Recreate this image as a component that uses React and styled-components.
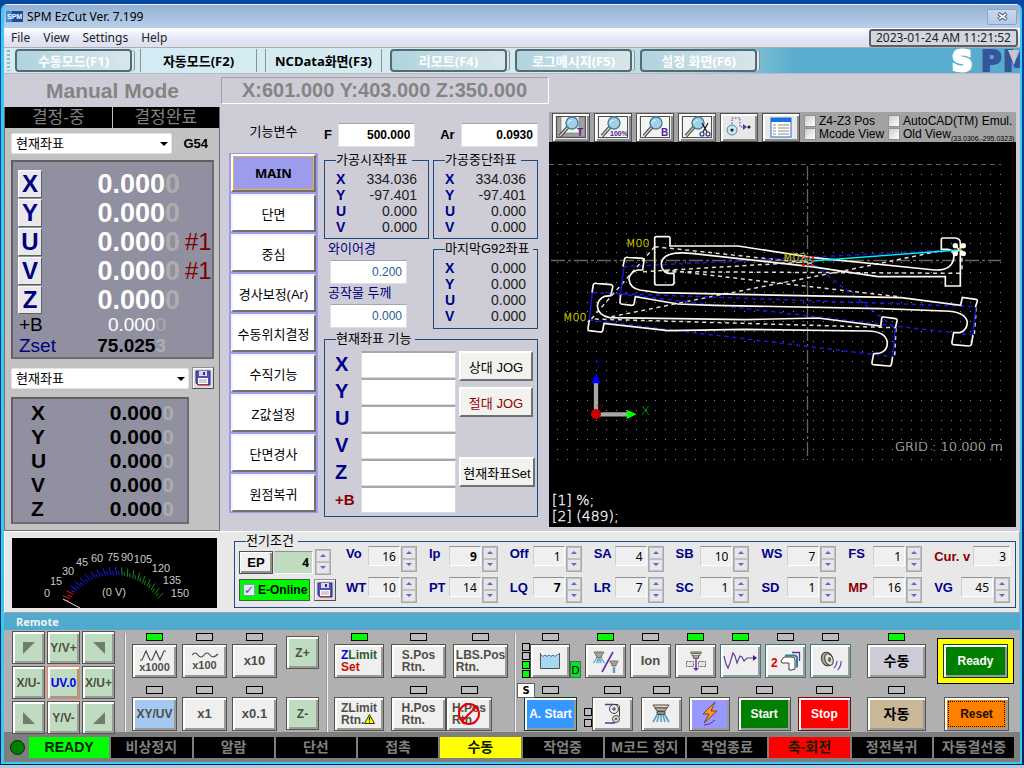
import React, { useId } from "react";
import styled, { createGlobalStyle, css } from "styled-components";

const KR = '"Liberation Sans", "Noto Sans CJK KR", sans-serif';
const UI = '"Noto Sans", "Noto Sans CJK KR", sans-serif';

const Global = createGlobalStyle`
  * { box-sizing: border-box; }
  body { margin: 0; background: #0c4da6; font-family: ${KR}; font-size: 13px; color: #000; }
  button, input, select { font-family: inherit; margin: 0; padding: 0; border-radius: 0; }
  svg { display: block; }
`;

/* ---------- window frame ---------- */
const Desktop = styled.div`
  min-height: 100vh;
  display: flex;
  flex-direction: column;
  padding: 4px 2px 0 1px;
  background: linear-gradient(180deg, #0648a0, #04245a);
`;
const Frame = styled.div`
  flex: 1;
  display: flex;
  flex-direction: column;
  border: solid #3cc8f0;
  border-width: 0 2px 2px 3px;
  border-radius: 6px 6px 0 0;
  overflow: hidden;
  background: #cecdd7;
`;
const Taskbar = styled.div`
  height: 3px;
  margin: 1px -2px 0 -1px;
  background: #b4c8dc;
`;
const TitleBar = styled.header`
  display: flex;
  align-items: center;
  gap: 4px;
  height: 24px;
  padding: 0 3px 0 2px;
  border-top: 1px solid #e8f2fc;
  background: linear-gradient(180deg, #93b0d2, #b9d0ea);
  font: 12px/16px ${UI};
`;
const CloseButton = styled.button`
  width: 30px;
  height: 16px;
  margin-left: auto;
  display: grid;
  place-items: center;
  border: 1px solid #8ca4c4;
  border-radius: 2px;
  background: linear-gradient(180deg, #c8d8ec, #b4cae6);
`;
const MenuBar = styled.nav`
  display: flex;
  align-items: center;
  gap: 13px;
  height: 20px;
  padding: 0 2px 0 7px;
  background: linear-gradient(180deg, #fff, #e6e8f6 50%, #dbdff1);
  border-bottom: 1px solid #b0b0a8;
`;
const MenuItem = styled.button`
  border: 0;
  background: none;
  font: 12px/16px ${UI};
  color: #222;
`;
const Clock = styled.time`
  margin-left: auto;
  padding: 0 5px;
  border: 2px solid #5a5e66;
  border-radius: 3px;
  background: #d4d6e2;
  font: 12px/14px ${UI};
  color: #222;
`;

/* ---------- mode tabs ---------- */
const ModeBar = styled.div`
  display: flex;
  align-items: center;
  height: 26px;
  padding-left: 3px;
  background: linear-gradient(90deg, #d2ecf3 0, #d6eaf0 55%, #a4d0de 70%, #58accd 78%);
  border-bottom: 1px solid #b8bcc8;
`;
const Grip = styled.span`
  width: 3px;
  height: 21px;
  margin-right: 5px;
  background: repeating-linear-gradient(180deg, #a4b0b8 0 2px, transparent 2px 4px);
`;
const ModeTab = styled.button`
  width: 117px;
  height: 23px;
  margin-right: 8px;
  font: bold 13px/16px ${UI};
  ${(p) =>
    p.$flat
      ? css`
          border: solid #8a9298;
          border-width: 0 1px;
          background: none;
          color: #000;
        `
      : css`
          border: 2px solid #566a72;
          border-radius: 4px;
          background: linear-gradient(90deg, #b0d4de, #d8e6ea);
          box-shadow: 3px 0 0 -1px #d6eaf0, 4px 0 0 -1px #8a9298;
          color: #fff;
        `}
`;
const Logo = styled.svg`
  margin-left: auto;
  width: 70px;
  height: 25px;
  overflow: visible;
`;
const ModeRow = styled.div`
  display: flex;
  align-items: center;
  height: 33px;
  font: bold 20px/24px "Liberation Sans", sans-serif;
  color: #848484;
`;
const ModeName = styled.h1`
  width: 217px;
  margin: 0;
  text-align: center;
  font-size: 21px;
  line-height: 24px;
`;
const ModePos = styled.div`
  width: 328px;
  height: 27px;
  padding-left: 20px;
  border: 1px solid;
  border-color: #a0a0a4 #fff #fff #a0a0a4;
`;

/* ---------- main area ---------- */
const Main = styled.main`
  flex: 1;
  display: flex;
`;
const Side = styled.section`
  width: 216px;
  background: #c2c2c2;
  border: solid #707070;
  border-width: 0 1px 1px 1px;
`;
const PosHead = styled.div`
  display: grid;
  grid-template-columns: 1fr 1fr;
  gap: 1px;
  background: #c0c0c0;
  font-size: 17px;
  line-height: 21px;
  text-align: center;
  color: #808080;
  & > span { background: #000; }
`;
const SideRow = styled.div`
  display: flex;
  align-items: center;
  justify-content: space-between;
  padding: ${(p) => (p.$tight ? "0 5px 0 6px" : "5px 11px 0 6px")};
  height: ${(p) => (p.$tight ? 38 : 26)}px;
  font-weight: bold;
`;
const SelectWrap = styled.div`
  position: relative;
  width: ${(p) => p.$w}px;
  &::after {
    content: "";
    position: absolute;
    right: 4px;
    top: 9px;
    border: 4px solid transparent;
    border-top-color: #000;
    border-bottom: 0;
    pointer-events: none;
  }
`;
const Select = styled.select`
  appearance: none;
  width: 100%;
  height: 21px;
  padding: 0 4px;
  border: 1px solid #e4e4e4;
  border-radius: 2px;
  background: #fff;
  font-size: 13px;
  color: #000;
`;
const Display = styled.div`
  margin: ${(p) => (p.$small ? "0 30px 6px 6px" : "6px 5px 0 6px")};
  padding: ${(p) => (p.$small ? "2px 0 1px" : "7px 0 1px")};
  border: 2px solid;
  border-color: #606060 #6c6c74 #6c6c74 #606060;
  background: #9090a0;
  font-family: "Liberation Sans", sans-serif;
`;
const AxisRow = styled.div`
  display: grid;
  grid-template-columns: 64px auto 1fr;
  align-items: center;
  height: 29px;
  padding-left: 5px;
`;
const AxisButton = styled.button`
  width: 24px;
  height: 28px;
  border: 1px solid;
  border-color: #fff #606060 #606060 #fff;
  background: #e8e8ec;
  font-weight: bold;
  font-size: 24px;
  line-height: 24px;
  color: #00007c;
`;
const AxisValue = styled.span`
  width: 98px;
  text-align: right;
  font-weight: bold;
  font-size: 27px;
  line-height: 28px;
  color: #fff;
`;
const Faint = styled.span`
  color: #adadad;
`;
const Turn = styled.span`
  padding-left: 5px;
  font-size: 24px;
  color: #800000;
`;
const ExtraRow = styled.div`
  display: flex;
  justify-content: space-between;
  padding: 0 46px 0 6px;
  height: 21px;
  line-height: 21px;
  font-size: 19px;
  color: ${(p) => p.$color};
`;
const ExtraValue = styled.span`
  color: ${(p) => (p.$bold ? "#000" : "#fff")};
  font-weight: ${(p) => (p.$bold ? "bold" : "normal")};
`;
const SmallAxis = styled.div`
  display: flex;
  justify-content: space-between;
  padding: 0 13px 0 18px;
  font-weight: bold;
  font-size: 21px;
  line-height: 24px;
`;
const IconButton = styled.button`
  width: 22px;
  height: 22px;
  display: grid;
  place-items: center;
  border: 1px solid;
  border-color: #909090 #505050 #505050 #909090;
  background: #dcdcdc;
  box-shadow: inset 1px 1px #fff;
`;

/* ---------- functions ---------- */
const Functions = styled.section`
  display: grid;
  grid-template-columns: 89px 214px;
  column-gap: 6px;
  width: 329px;
  padding-left: 9px;
  align-content: start;
`;
const FnTitle = styled.div`
  height: 46px;
  padding-top: 16px;
  line-height: 18px;
  text-align: center;
`;
const FnMenu = styled.nav`
  display: grid;
  gap: 2px;
  padding: 1px 2px;
  background: #9c9cee;
  align-self: start;
`;
const FnButton = styled.button`
  height: 38px;
  border: 2px solid;
  border-color: ${(p) => (p.$on ? "#fff #707070 #707070 #fff" : "#f4f4f4 #707070 #707070 #f4f4f4")};
  background: ${(p) => (p.$on ? "#9c9cee" : "#fff")};
  outline: ${(p) => (p.$on ? "1px solid #f0b030" : "0")};
  outline-offset: -3px;
  font-family: ${(p) => (p.$on ? UI : KR)};
  font-weight: ${(p) => (p.$on ? "bold" : "normal")};
  font-size: 13px;
  white-space: nowrap;
`;
const Variables = styled.div`
  display: flex;
  align-items: center;
  justify-content: space-between;
  height: 29px;
  margin: 13px 0 3px;
  font-weight: bold;
`;
const VarInput = styled.input`
  width: 77px;
  height: 24px;
  padding: 0 4px;
  border: 1px solid #e0e0e4;
  border-top-color: #a4a4ac;
  background: #fff;
  text-align: right;
  font-weight: ${(p) => (p.$plain ? "normal" : "bold")};
  font-size: 12px;
  color: ${(p) => (p.$plain ? "#285c98" : "#000")};
`;
const Gap = styled.span`
  width: 12px;
`;
const Pair = styled.div`
  display: grid;
  grid-template-columns: 1fr 1fr;
  gap: 4px;
  margin-bottom: 2px;
`;
const Box = styled.fieldset`
  margin: 0;
  min-width: 0;
  border: 1px solid #1c4c80;
  padding: ${(p) => p.$pad || "3px 11px 3px"};
`;
const Legend = styled.legend`
  margin-left: ${(p) => p.$ml || 0}px;
  padding: 0 4px 0 0;
  line-height: 16px;
  font-size: 13px;
  white-space: nowrap;
`;
const Coord = styled.dl`
  display: flex;
  justify-content: space-between;
  margin: 0;
  font-size: 14px;
  line-height: 16px;
`;
const CoordAxis = styled.dt`
  font-weight: bold;
  color: #00008a;
`;
const CoordValue = styled.dd`
  margin: 0;
  color: #202020;
`;
const Field = styled.div`
  padding: 0 0 1px 4px;
  & > label { display: block; height: 19px; line-height: 16px; color: #00007c; }
  & > input { display: block; margin-left: 2px; }
`;
const JogGrid = styled.div`
  display: grid;
  grid-template-columns: 121px 76px;
  column-gap: 3px;
`;
const JogRow = styled.div`
  display: flex;
  align-items: center;
  justify-content: space-between;
  height: 27px;
  color: ${(p) => (p.$b ? "#800000" : "#00008a")};
  font-weight: bold;
  font-size: ${(p) => (p.$b ? 15 : 20)}px;
`;
const JogInput = styled.input`
  width: 95px;
  height: 27px;
  border: 1px solid #d8dce0;
  border-top: 2px solid #a8a8ac;
  background: #fff;
`;
const JogButtons = styled.div`
  display: flex;
  flex-direction: column;
  gap: 6px;
  padding-bottom: 26px;
`;
const JogButton = styled.button`
  width: ${(p) => (p.$set ? 76 : 74)}px;
  height: 30px;
  margin-top: ${(p) => (p.$set ? "auto" : "0")};
  border: 2px solid;
  border-color: #fff #707070 #707070 #fff;
  background: #f2f2ee;
  white-space: nowrap;
  font-size: 13px;
  color: ${(p) => p.$color || "#000"};
`;

/* ---------- viewer ---------- */
const Viewer = styled.section`
  flex: 1;
  min-width: 0;
  display: flex;
  flex-direction: column;
  margin: 5px 4px 4px 0;
`;
const ViewTools = styled.div`
  display: flex;
  align-items: center;
  gap: 4px;
  height: 30px;
  padding: 0 3px;
  background: #a2a2a2;
`;
const ViewButton = styled.button`
  width: 38px;
  height: 29px;
  display: grid;
  place-items: center;
  border: 1px solid #505050;
  box-shadow: inset 2px 2px #fff, inset -2px -2px #8c8c8c;
  background: #e8e8e8;
  flex: none;
`;
const Checks = styled.div`
  position: relative;
  display: grid;
  grid-template-columns: 80px auto;
  column-gap: 4px;
  font-size: 12px;
`;
const Check = styled.label`
  display: flex;
  align-items: center;
  gap: 3px;
  height: 13px;
  white-space: nowrap;
`;
const CheckBox = styled.input`
  appearance: none;
  width: 12px;
  height: 12px;
  flex: none;
  border: 1px solid #909090;
  background: linear-gradient(135deg, #c8ccd0, #fff);
  ${(p) =>
    p.$blue &&
    css`
      border-color: #8098b8;
      background: #e4ecf8;
      display: grid;
      place-items: center;
      &:checked::after { content: "✓"; font: bold 12px/10px "DejaVu Sans", sans-serif; color: #3c50a0; }
    `}
`;
const Cursor = styled.span`
  position: absolute;
  right: -2px;
  bottom: -3px;
  font-size: 7px;
  line-height: 8px;
`;
const Canvas = styled.svg`
  width: 100%;
  height: auto;
  background: #000;
  font-family: "DejaVu Sans", sans-serif;
  font-weight: 200;
`;

/* ---------- electric conditions ---------- */
const Electric = styled.section`
  display: grid;
  grid-template-columns: 205px minmax(0, 1fr);
  gap: 17px;
  height: 82px;
  padding: 1px 3px 5px 7px;
  border: 1px solid;
  border-color: #fff #a0a0a0 #a0a0a0 #fff;
  background: #e8e8e8;
`;
const Gauge = styled.svg`
  width: 205px;
  height: 70px;
  margin-top: 5px;
  background: #000;
  font-family: "Liberation Sans", sans-serif;
`;
const ElecBody = styled.div`
  display: grid;
  grid-template-columns: 97px 1fr;
  gap: 10px;
`;
const ElecLeft = styled.div`
  display: grid;
  grid-template-columns: auto auto auto;
  justify-content: space-between;
  align-content: start;
  row-gap: 4px;
`;
const EpButton = styled.button`
  width: 34px;
  height: 23px;
  margin-top: 2px;
  border: 1px solid #505050;
  box-shadow: inset 1px 1px #fff, inset -2px -2px #909090;
  background: #f0f0f0;
  font-weight: bold;
  font-size: 13px;
`;
const OnlineLabel = styled.label`
  grid-column: 1 / 3;
  width: 71px;
  height: 22px;
  display: flex;
  align-items: center;
  gap: 3px;
  padding-left: 3px;
  border: 1px solid #406040;
  background: #00f800;
  font-weight: bold;
  font-size: 12px;
  white-space: nowrap;
`;
const Params = styled.div`
  display: grid;
  grid-template-columns: 71fr 69fr 72fr 70fr 74fr 75fr 74fr 76fr;
  column-gap: 12px;
  row-gap: 5px;
  align-content: start;
  margin-top: -3px;
`;
const Param = styled.div`
  display: flex;
  align-items: flex-start;
  height: 26px;
  & > label {
    margin-right: auto;
    font-weight: bold;
    font-size: 13px;
    line-height: ${(p) => (p.$low ? 22 : 16)}px;
    white-space: nowrap;
    color: ${(p) => (p.$red ? "#8a0000" : "#00008a")};
  }
`;
const ParamInput = styled.input`
  width: ${(p) => p.$w || 32}px;
  height: ${(p) => (p.$green ? 23 : 20)}px;
  margin-top: ${(p) => (p.$green ? 2 : 0)}px;
  padding: 0 3px;
  border: 1px solid;
  border-color: #909090 #fff #fff #d0d0d0;
  background: ${(p) => (p.$green ? "#c0dcc0" : "#efefef")};
  text-align: right;
  font: ${(p) => (p.$bold ? "bold" : "normal")} 12px/16px ${UI};
`;
const SpinWrap = styled.span`
  display: grid;
  width: 16px;
  height: 26px;
  margin-left: 1px;
  padding: 0;
  border: 1px solid #a8a8ac;
  background: #fff;
`;
const SpinButton = styled.button`
  display: grid;
  place-items: center;
  min-height: 0;
  border: 1px solid #c0c0c4;
  background: #e6e6ea;
`;

/* ---------- remote ---------- */
const RemoteTitle = styled.h2`
  margin: 0;
  height: 17px;
  padding-left: 12px;
  background: #50aacd;
  font: bold 11px/17px "Noto Sans", sans-serif;
  color: #f4f4f4;
`;
const Remote = styled.section`
  display: flex;
  height: 102px;
  padding: 3px 6px 0 8px;
  background: #b0b0b0;
`;
const Divider = styled.span`
  width: 2px;
  margin: 0 6px;
  background: linear-gradient(90deg, #989898 50%, #f0f0f0 50%);
`;
const Pad = styled.div`
  display: grid;
  grid-template-columns: repeat(3, 33px);
  grid-auto-rows: 33px;
  gap: 2px;
  width: 106px;
  margin-top: -2px;
`;
const Raised = styled.button`
  position: relative;
  width: ${(p) => (p.$w ? p.$w + "px" : "auto")};
  height: ${(p) => p.$h || 34}px;
  display: grid;
  place-items: center;
  flex: none;
  border: 1px solid ${(p) => p.$edge || "#55554e"};
  box-shadow: inset 2px 2px #fff, inset -2px -2px #9a9a9a;
  background: ${(p) => p.$bg || "#efefef"};
  color: ${(p) => p.$color || "#4e4e46"};
  font-weight: bold;
  font-size: ${(p) => p.$fs || 12}px;
  line-height: 12px;
  white-space: nowrap;
`;
const PadButton = styled(Raised)`
  height: 33px;
  background: #c0dcc0;
  font-size: 12px;
`;
const TwoLine = styled.span`
  text-align: left;
`;
const Blue = styled.span`
  color: #0000f0;
`;
const Green = styled.span`
  color: #2c5c2c;
`;
const Red = styled.span`
  color: #c01000;
`;
const Rows = styled.div`
  display: flex;
  flex-direction: column;
  gap: 8px;
  margin-left: ${(p) => (p.$push ? "auto" : "0")};
`;
const Row = styled.div`
  display: flex;
  align-items: flex-end;
  gap: ${(p) => p.$gap || 0}px;
  height: 45px;
  justify-content: ${(p) => (p.$spread ? "space-between" : "flex-start")};
  padding-left: ${(p) => (p.$spread ? 2 : 0)}px;
`;
const Cell = styled.div`
  display: flex;
  flex-direction: column;
  align-items: center;
  gap: 3px;
  position: relative;
`;
const Lamp = styled.span`
  width: 17px;
  height: 8px;
  border: 1px solid #000;
  visibility: ${(p) => (p.$none ? "hidden" : "visible")};
  background: ${(p) => (p.$on ? "#00ff00" : "#bcbcbc")};
`;
const LampStack = styled.span`
  display: grid;
  gap: ${(p) => (p.$two ? 3 : 1)}px;
  align-self: flex-end;
  margin-bottom: ${(p) => (p.$two ? 4 : 0)}px;
  & > ${Lamp} { width: 8px; }
`;
const ZCol = styled.div`
  display: flex;
  flex-direction: column;
  justify-content: space-between;
  margin: 3px 1px 2px 9px;
`;
const Horizontal = styled.div`
  display: flex;
`;
const SButton = styled.button`
  position: absolute;
  left: -7px;
  top: -3px;
  width: 18px;
  height: 15px;
  border: 1px solid #606060;
  background: #fff;
  font: bold 10px/12px "DejaVu Sans", sans-serif;
`;
const DButton = styled.button`
  align-self: flex-end;
  width: 11px;
  height: 17px;
  border: 1px solid #606060;
  background: #00e820;
  font-size: 11px;
  line-height: 12px;
`;
const Gold = styled.div`
  margin: 5px 0 0 11px;
  padding: 5px;
  border: 1px solid #000;
  background: #ffff00;
`;
const LastCol = styled.div`
  display: flex;
  flex-direction: column;
`;
const ResetWrap = styled.div`
  margin: 13px 0 0 18px;
`;
const ResetButton = styled(Raised)`
  outline: 1px dotted #000;
  outline-offset: -5px;
`;

/* ---------- status ---------- */
const Status = styled.footer`
  display: flex;
  align-items: center;
  gap: 2px;
  height: 30px;
  padding: 0 6px;
  background: #7e7e7e;
  text-align: center;
`;
const Dot = styled.span`
  width: 15px;
  height: 15px;
  margin-right: 2px;
  border: 1px solid #102010;
  border-radius: 50%;
  background: #008000;
`;
const StatusCell = styled.div`
  flex: 1;
  height: 21px;
  font: bold 14px/20px ${KR};
  white-space: nowrap;
  background: ${(p) => p.$bg || "#000"};
  color: ${(p) => (p.$bg ? "#102000" : "#808080")};
`;

/* ---------- small drawings ---------- */
const Floppy = () => (
  <svg width="16" height="16" viewBox="0 0 16 16">
    <path d="M1 1h14v14H3l-2-2z" fill="#5050b8" stroke="#303088" />
    <rect x="4" y="1" width="8" height="5" fill="#d8d8f0" />
    <rect x="8" y="2" width="2" height="3" fill="#303088" />
    <rect x="3" y="8" width="10" height="7" fill="#fff" />
    <path d="M4 10h8M4 12h8" stroke="#a0a0a0" />
    <path d="M3 14.5h10" stroke="#e02020" />
  </svg>
);
const Caret = ({ down }) => (
  <svg width="6" height="4" viewBox="0 0 6 4">
    <path d={down ? "M0 0h6l-3 3z" : "M3 0l3 3H0z"} fill="#5070b8" />
  </svg>
);
const Lens = ({ kind }) => (
  <svg width="32" height="24" viewBox="0 0 32 24">
    <rect x="1.5" y="1.5" width="29" height="21" fill="#f4f4f0" stroke="#505050" />
    {kind === "T" && <path d="M2 2h4v16h18V2h6v20H2z" fill="#a0a0a0" stroke="#606060" strokeWidth=".5" />}
    <path d="M13 12l-8 9" stroke="#404040" strokeWidth="3.4" />
    <path d="M13 12l-8 9" stroke="#d0d0d0" strokeWidth="1.4" />
    <circle cx="17" cy="8" r="6" fill="#a4d0e4" stroke="#4080a0" strokeWidth="1.4" />
    <path d="M13 8q1-3 4-3" fill="none" stroke="#e8f8ff" />
    {kind === "cut" ? (
      <g fill="none" stroke="#303090" strokeWidth="1.2">
        <path d="M21 8l5 9M27 8l-5 9" stroke="#101010" />
        <circle cx="21" cy="19" r="2" />
        <circle cx="27" cy="19" r="2" />
      </g>
    ) : (
      <text x={kind === "100%" ? 13 : 22} y="21" fontSize={kind === "100%" ? 7 : 10} fontWeight="bold" fontFamily="Liberation Sans" fill="#502090">
        {kind}
      </text>
    )}
  </svg>
);
const TargetIcon = () => (
  <svg width="32" height="24" viewBox="0 0 32 24">
    <circle cx="9" cy="15" r="5" fill="#c8e8f0" stroke="#5090a8" />
    <path d="M9 9v-6h8v9h7" fill="none" stroke="#6030a0" strokeDasharray="1.5 1.5" />
    <path d="M20 9l4 3-4 3z" fill="#6030a0" />
    <circle cx="9" cy="15" r="1.6" fill="#202020" />
    <circle cx="26" cy="12" r="1.6" fill="#202020" />
  </svg>
);
const ListIcon = () => (
  <svg width="22" height="21" viewBox="0 0 22 21">
    <rect x="1" y="1" width="20" height="19" fill="#fff" stroke="#2868c8" />
    <rect x="1" y="1" width="20" height="4" fill="#1870e0" />
    <path d="M3 8h3M3 11h3M3 14h3M3 17h3M8 8h11M8 11h11M8 14h11M8 17h11" stroke="#888" />
  </svg>
);
const Nozzle = ({ x, y, s = 1, spray }) => (
  <g transform={`translate(${x} ${y}) scale(${s})`}>
    <path d="M-6 0h12l-2 4h-8z" fill="#e0dcd0" stroke="#504840" />
    <path d="M-4 1.5h8M-3 4v3h6V4" fill="#b0a898" stroke="#504840" />
    {spray && <path d="M-3 8l-4 6M-1 8l-2 6M1 8l2 6M3 8l4 6M0 8v6" stroke="#50a0c8" strokeWidth="1.4" fill="none" />}
  </g>
);
const TankIcon = () => (
  <svg width="24" height="22" viewBox="0 0 24 22">
    <path d="M2 5l3 2 3-2 3 2 3-2 3 2 5-2v13H2z" fill="#a8d8f0" />
    <path d="M2.500 3v15.500h19V3" fill="none" stroke="#505050" />
    <path d="M3 5q2 3 4 0 2 3 4 0 2 3 4 0 2 3 4 0l3-1" fill="none" stroke="#2878a0" />
  </svg>
);
const SprayPair = () => (
  <svg width="30" height="26" viewBox="0 0 30 26">
    <Nozzle x={8} y={4} s={0.8} spray />
    <Nozzle x={23} y={13} s={0.7} />
    <path d="M23 19v6" stroke="#50a0c8" strokeWidth="2.4" />
    <path d="M22 4L11 24" stroke="#6030a0" strokeWidth="1.6" />
  </svg>
);
const Drill = () => (
  <svg width="26" height="24" viewBox="0 0 26 24">
    <Nozzle x={13} y={3} s={0.9} />
    <path d="M3.500 12.500h7v5h-7zM15.500 12.500h7v5h-7z" fill="#e4e4e4" stroke="#606060" strokeDasharray="2 1" />
    <path d="M13 10v10" stroke="#6030a0" strokeWidth="1.4" />
    <path d="M10 19h6l-3 3z" fill="#6030a0" />
  </svg>
);
const DecayWave = () => (
  <svg width="35" height="20" viewBox="0 0 35 20">
    <path d="M1 5L3 13 5 17 7 12 10 2 12 5 14 12 17 5 19 6 21 10 24 7 26 7H33" fill="none" stroke="#6040a0" strokeWidth="1.2" />
    <path d="M30 4l4 3-4 3z" fill="#402080" />
  </svg>
);
const Bends = () => (
  <svg width="30" height="22" viewBox="0 0 30 22">
    <text x="0" y="17" fontSize="12" fontWeight="bold" fontFamily="Liberation Sans" fill="#e00000">2</text>
    <path d="M21 2.500h7.500V11" fill="none" stroke="#6030a0" strokeWidth="1.300" />
    <path d="M14 5.500h9q3 0 3 3v9" fill="none" stroke="#308090" strokeWidth="2" />
    <path d="M10 11l3-4h8q3 0 3 3v9l-3 1h-3v-7h-7z" fill="#fff" stroke="#404040" />
  </svg>
);
const Horn = () => (
  <svg width="26" height="24" viewBox="0 0 26 24">
    <ellipse cx="9" cy="10" rx="5.500" ry="7" fill="#a8a898" stroke="#404038" transform="rotate(-20 9 10)" />
    <ellipse cx="11" cy="10.500" rx="4" ry="6" fill="#e0e0d4" stroke="#404038" transform="rotate(-20 11 10.500)" />
    <ellipse cx="11.500" cy="10.500" rx="1.500" ry="2.500" fill="#606058" />
    <path d="M16 19q3-3 3-7M19.500 21q4-4 3.500-9" fill="none" stroke="#6050b0" strokeWidth="1.2" />
  </svg>
);
const Belt = () => (
  <svg width="20" height="22" viewBox="0 0 20 22">
    <path d="M2 1.500h10M2 20h10" stroke="#6030a0" strokeWidth="1.4" />
    <circle cx="11" cy="6" r="4.500" fill="#e8e8e8" stroke="#404040" />
    <path d="M9 6h4M11 4v4" stroke="#404040" />
    <circle cx="13" cy="16" r="3.500" fill="#e8e8e8" stroke="#404040" />
    <path d="M11.500 16h3M13 14.500v3" stroke="#404040" />
    <path d="M12 1.500h3q1.500 1 1.500 3v9" fill="none" stroke="#404040" />
  </svg>
);
const SprayIcon = () => (
  <svg width="26" height="22" viewBox="0 0 26 22">
    <path d="M5 2h16l-2 3H7z" fill="#e0dcd0" stroke="#504840" />
    <path d="M7 5h12l-2 3H9z" fill="#c0b8a8" stroke="#504840" />
    <path d="M9 8.500h8v3H9z" fill="#909088" stroke="#504840" />
    <path d="M9 12l-4 7M11 12l-2 7M13 12v7M15 12l2 7M17 12l4 7" stroke="#50a0c8" strokeWidth="1.600" />
  </svg>
);
const Lightning = () => (
  <svg width="24" height="26" viewBox="0 0 24 26">
    <path d="M17 1L5 13h6l-5 9L19 10h-6z" fill="#ff9820" stroke="#804020" />
    <path d="M6 24q6 0 11-5" fill="none" stroke="#5030a0" />
  </svg>
);
const Zigzag = ({ soft }) => (
  <svg width="28" height={soft ? 8 : 11} viewBox={soft ? "0 0 28 8" : "0 0 28 11"}>
    <path d={soft ? "M1 4q3-4 6 0t6 0 6 0 8-1" : "M1 10h2l4-9 4 9h2l4-9 4 9 4-9h2"} fill="none" stroke="#4c4c46" strokeWidth="1.2" />
  </svg>
);
const Corner = ({ d }) => (
  <svg width="12" height="12" viewBox="0 0 12 12">
    <path d={d} fill="#747c70" />
  </svg>
);
const WarnSvg = styled.svg`
  display: inline-block;
`;
const Warning = () => (
  <WarnSvg width="11" height="10" viewBox="0 0 11 10">
    <path d="M5.500 .5L10.500 9.500H.5z" fill="#ffff00" stroke="#303000" />
    <path d="M5.500 3v3.500M5.500 7.500v1" stroke="#000" strokeWidth="1.2" />
  </WarnSvg>
);
const BanSvg = styled.svg`
  position: absolute;
  left: 10px;
  top: 4px;
`;
const Ban = () => (
  <BanSvg width="24" height="24" viewBox="0 0 24 24">
    <circle cx="12" cy="12" r="10" fill="none" stroke="#e80000" strokeWidth="2" />
    <path d="M19 5L5 19" stroke="#e80000" strokeWidth="2" />
  </BanSvg>
);

/* ---------- plotted program ---------- */
const dots = [];
for (let i = 0; i < 46; i++)
  for (let j = 1; j < 31; j++) dots.push(`M${Math.round(557 + i * 9.84)} ${Math.round(164 + j * 9.83)}h1v1h-1z`);
const DOTS = dots.join("");

const PROFILES = [
  "M325 50H362Q366 50 366 55V78H570L790 112L1160 150Q1218 152 1218 105Q1216 90 1200 88L1180 88V58Q1180 54 1184 54H1222Q1237 55 1237 70V198H1192V170H990L790 140L430 100Q345 92 340 130Q340 155 360 160L378 160V190Q376 195 370 195H325Q320 195 320 190V55Q320 50 325 50Z",
  "M225 140L230 116Q232 111 240 112L284 115Q289 116 288 122L284 150L268 150Q244 158 243 178Q246 204 275 210L330 218L1060 233L1238 256L1243 232L1284 238Q1289 239 1288 244L1282 262M1275 345L1270 374Q1268 378 1262 378L1216 374Q1211 373 1212 366L1217 338L1236 338Q1258 330 1258 305Q1250 274 1190 273L1000 266L500 256L390 252L262 230L258 252Q257 256 250 256L220 252Q215 250 216 245L218 222",
  "M132 218L136 194Q138 189 144 190L190 194Q195 196 194 202L188 227L170 229Q150 238 148 258Q150 286 185 293L590 299L810 294L998 318L1001 295Q1002 290 1008 291L1043 296Q1048 297 1047 303L1042 325M1034 410L1030 434Q1028 439 1022 438L976 434Q971 433 972 427L977 401L996 399Q1018 392 1018 368Q1014 334 960 333L590 328L360 332L168 310L164 332Q162 337 156 336L124 332Q119 331 120 325L124 300",
];

const Plot = () => (
  <Canvas viewBox="549 142 467 385">
    <path d={DOTS} fill="#8c8c8c" shapeRendering="crispEdges" />
    <path d="M549 164.500H1001" stroke="#606060" strokeDasharray="5 4" />
    <path d="M551 260.500H1001M807.500 166V460" stroke="#646464" strokeWidth="1.300" strokeDasharray="14 3 3 3" />
    <g transform="translate(548 220) scale(.33333)" fill="none">
      <g stroke="#dedbd0" strokeWidth="4.500" strokeDasharray="12 11">
        <path d="M320 80L790 130M285 155L790 125M350 155L1240 160M350 150L1050 230M190 290L540 220L900 150L1180 92M320 80L130 297L1040 323M1242 90V160M1285 262L1279 345M1044 325L1040 410" />
      </g>
      <g stroke="#1818e0" strokeWidth="4.500" strokeDasharray="13 11">
        <path d="M225 140L780 112L1200 90M132 218L1282 260M216 222L1275 345M124 300L1034 410M800 135L1042 325" />
      </g>
      {PROFILES.map((d) => (
        <path key={d} d={d} stroke="#fff8f0" strokeWidth="5" />
      ))}
      <path d="M228 140L217 225M133 218L124 300M1284 262L1274 345M1042 325L1034 410" stroke="#1818e0" strokeWidth="4" />
      <path d="M790 123L1230 90" stroke="#00f8f8" strokeWidth="4" />
      <path d="M765 112h30v24h-30z" stroke="#e82020" strokeWidth="6" strokeDasharray="8 5" />
      <path d="M770 118h20v14h-20z" stroke="#20e0e0" strokeWidth="5" strokeDasharray="5 9" />
      <g fill="#fff">
        <circle cx="1222" cy="77" r="8" />
        <circle cx="1246" cy="77" r="8" />
        <circle cx="1222" cy="101" r="8" />
        <circle cx="1246" cy="101" r="8" />
      </g>
      <path d="M1226 81l16 16M1242 81l-16 16" stroke="#fff" strokeWidth="4" />
      <circle cx="1236" cy="88" r="4" fill="#c0c000" />
      <path d="M144 580V485M144 583H240" stroke="#a8a8a8" strokeWidth="13" />
      <path d="M144 460l14 30h-28z" fill="#0000ff" />
      <path d="M266 583l-30-14v28z" fill="#00ff00" />
      <circle cx="144" cy="582" r="15" fill="#d00000" />
    </g>
    <g fill="#c8c800" stroke="#c8c800" strokeWidth=".3" fontSize="11">
      <text x="626" y="247">M00</text>
      <text x="563" y="321">M00</text>
      <text x="783" y="261">M02</text>
    </g>
    <text x="595" y="368" fontSize="12" fill="#0000c0">Y</text>
    <text x="641" y="415" fontSize="13" fill="#00b000">X</text>
    <text x="596" y="413" fontSize="11" fill="#a00000">Z</text>
    <text x="895" y="451" fontSize="13" fill="#c8c8c8" stroke="#c8c8c8" strokeWidth=".2">GRID : 10.000 m</text>
    <g fill="#fff" stroke="#fff" strokeWidth=".3" fontSize="14">
      <text x="552" y="505">[1] %;</text>
      <text x="552" y="521">[2] (489);</text>
    </g>
  </Canvas>
);

const MARKS = [[0, 47, 593], [15, 56, 581], [30, 68, 571], [45, 82, 562], [60, 97, 558], [75, 113, 557], [90, 127, 557], [105, 143, 559], [120, 161, 568], [135, 172, 580], [150, 180, 593]];
const ticks = [];
for (let a = -60; a <= 58; a += 3) {
  const r = (a * Math.PI) / 180;
  const outer = a % 2 ? 60 : 56;
  ticks.push({
    a,
    d: `M${114 + 52 * Math.sin(r)} ${627 - 52 * Math.cos(r)}L${114 + outer * Math.sin(r - 0.03)} ${627 - outer * Math.cos(r - 0.03)}`,
  });
}
const Meter = () => (
  <Gauge viewBox="12 538 205 70">
    {ticks.map((t) => (
      <path key={t.a} d={t.d} stroke={t.a < -50 ? "#f01010" : t.a < 8 ? "#1818ff" : "#109020"} />
    ))}
    <g fill="#c8c8c8" fontSize="11" textAnchor="middle">
      {MARKS.map(([n, x, y]) => (
        <text key={n} x={x} y={y + 4}>{n}</text>
      ))}
      <text x="114" y="596">(0 V)</text>
    </g>
    <path d="M63 599L80 608" stroke="#e0e0e0" />
  </Gauge>
);

/* ---------- composed parts ---------- */
const Value = ({ v }) => (
  <>
    {v.slice(0, -1)}
    <Faint>{v.slice(-1)}</Faint>
  </>
);
const Coords = ({ title, values, ml }) => (
  <Box>
    <Legend $ml={ml}>{title}</Legend>
    {["X", "Y", "U", "V"].map((a, i) => (
      <Coord key={a}>
        <CoordAxis>{a}</CoordAxis>
        <CoordValue>{values[i]}</CoordValue>
      </Coord>
    ))}
  </Box>
);
const Spinner = ({ name }) => (
  <SpinWrap>
    <SpinButton aria-label={`${name} +`}><Caret /></SpinButton>
    <SpinButton aria-label={`${name} -`}><Caret down /></SpinButton>
  </SpinWrap>
);
const ParamField = ({ name, value, red, bold, low, plain, w }) => {
  const id = useId();
  return (
    <Param $red={red} $low={low}>
      <label htmlFor={id}>{name}</label>
      <ParamInput id={id} defaultValue={value} $bold={bold} $w={w} />
      {!plain && <Spinner name={name} />}
    </Param>
  );
};
const LampButton = ({ on, noLamp, children, w, ...rest }) => (
  <Cell>
    <Lamp $on={on} $none={noLamp} />
    <Raised $w={w} {...rest}>{children}</Raised>
  </Cell>
);

const PARAMS = [
  ["Vo", "16"], ["Ip", "9", { bold: true }], ["Off", "1"], ["SA", "4"], ["SB", "10"], ["WS", "7"], ["FS", "1"], ["Cur. v", "3", { red: true, plain: true, w: 37, low: true }],
  ["WT", "10", { low: true }], ["PT", "14", { low: true }], ["LQ", "7", { bold: true, low: true }], ["LR", "7", { low: true }], ["SC", "1", { low: true }], ["SD", "1", { low: true }], ["MP", "16", { red: true, low: true }], ["VG", "45", { low: true }],
];
const STATUS = [
  ["READY", "#00ff00"], ["비상정지"], ["알람"], ["단선"], ["접촉"], ["수동", "#ffff00"], ["작업중"], ["M코드 정지"], ["작업종료"], ["축-회전", "#ff0000"], ["정전복귀"], ["자동결선중"],
];
const MENU = ["MAIN", "단면", "중심", "경사보정(Ar)", "수동위치결정", "수직기능", "Z값설정", "단면경사", "원점복귀"];
const TABS = [["수동모드(F1)"], ["자동모드(F2)", true], ["NCData화면(F3)", true], ["리모트(F4)"], ["로그메시지(F5)"], ["설정 화면(F6)"]];

export default function App() {
  return (
    <Desktop>
      <Global />
      <Frame>
        <TitleBar>
          <svg width="17" height="11" viewBox="0 0 17 11">
            <rect width="17" height="11" fill="#1c4c9c" />
            <rect width="6" height="11" fill="#3c8cd8" />
            <text x="1" y="8" fontSize="7" fontWeight="bold" fontFamily="Liberation Sans" fill="#fff">SPM</text>
          </svg>
          <span>SPM EzCut Ver. 7.199</span>
          <CloseButton aria-label="Close">
            <svg width="11" height="9" viewBox="0 0 11 9">
              <path d="M1.500 1.500l8 6M9.500 1.500l-8 6" stroke="#50586a" strokeWidth="3.600" />
              <path d="M2 2l7 5M9 2L2 7" stroke="#f4f6fa" strokeWidth="1.600" />
            </svg>
          </CloseButton>
        </TitleBar>
        <MenuBar>
          {["File", "View", "Settings", "Help"].map((m) => (
            <MenuItem key={m}>{m}</MenuItem>
          ))}
          <Clock>2023-01-24 AM 11:21:52</Clock>
        </MenuBar>
        <ModeBar>
          <Grip />
          {TABS.map(([t, flat]) => (
            <ModeTab key={t} $flat={flat}>{t}</ModeTab>
          ))}
          <Logo viewBox="0 0 70 25">
            <g fontFamily="DejaVu Sans" fontWeight="bold" fontSize="28">
              <text x="31" y="23" fill="#35549a" stroke="#35549a" strokeWidth="2">P</text>
              <text x="53" y="23" fill="#35549a" stroke="#35549a" strokeWidth="2">M</text>
              <path d="M58 2h11l-5 15z" fill="#c4c8cc" />
              <text x="2" y="23" fill="#fff" stroke="#fff" strokeWidth="3">S</text>
            </g>
          </Logo>
        </ModeBar>
        <ModeRow>
          <ModeName>Manual Mode</ModeName>
          <ModePos>X:601.000 Y:403.000 Z:350.000</ModePos>
        </ModeRow>

        <Main>
          <Side>
            <PosHead><span>결정-중</span><span>결정완료</span></PosHead>
            <SideRow>
              <SelectWrap $w={161}>
                <Select aria-label="좌표계"><option>현재좌표</option></Select>
              </SelectWrap>
              G54
            </SideRow>
            <Display>
              {["X", "Y", "U", "V", "Z"].map((a) => (
                <AxisRow key={a}>
                  <AxisButton>{a}</AxisButton>
                  <AxisValue><Value v="0.0000" /></AxisValue>
                  {(a === "U" || a === "V") && <Turn>#1</Turn>}
                </AxisRow>
              ))}
              <ExtraRow $color="#000">+B <ExtraValue><Value v="0.0000" /></ExtraValue></ExtraRow>
              <ExtraRow $color="#00007c">Zset <ExtraValue $bold><Value v="75.0253" /></ExtraValue></ExtraRow>
            </Display>
            <SideRow $tight>
              <SelectWrap $w={178}>
                <Select aria-label="표시 좌표계"><option>현재좌표</option></Select>
              </SelectWrap>
              <IconButton aria-label="저장"><Floppy /></IconButton>
            </SideRow>
            <Display $small>
              {["X", "Y", "U", "V", "Z"].map((a) => (
                <SmallAxis key={a}>{a} <span><Value v="0.0000" /></span></SmallAxis>
              ))}
            </Display>
          </Side>

          <Functions>
            <div>
              <FnTitle>기능변수</FnTitle>
              <FnMenu>
                {MENU.map((m, i) => (
                  <FnButton key={m} $on={i === 0}>{m}</FnButton>
                ))}
              </FnMenu>
            </div>
            <div>
              <Variables>
                <label htmlFor="feed">F</label>
                <VarInput id="feed" defaultValue="500.000" />
                <Gap />
                <label htmlFor="ar">Ar</label>
                <VarInput id="ar" defaultValue="0.0930" />
              </Variables>
              <Pair>
                <Coords title="가공시작좌표" values={["334.036", "-97.401", "0.000", "0.000"]} />
                <Coords title="가공중단좌표" values={["334.036", "-97.401", "0.000", "0.000"]} />
              </Pair>
              <Pair>
                <div>
                  <Field>
                    <label htmlFor="wire">와이어경</label>
                    <VarInput id="wire" defaultValue="0.200" $plain />
                  </Field>
                  <Field>
                    <label htmlFor="thick">공작물 두께</label>
                    <VarInput id="thick" defaultValue="0.000" $plain />
                  </Field>
                </div>
                <Coords title="마지막G92좌표" values={["0.000", "0.000", "0.000", "0.000"]} />
              </Pair>
              <Box $pad="4px 3px 3px 10px">
                <Legend $ml={1}>현재좌표 기능</Legend>
                <JogGrid>
                  <div>
                    {["X", "Y", "U", "V", "Z", "+B"].map((a) => (
                      <JogRow key={a} $b={a === "+B"}>
                        <label htmlFor={`jog${a}`}>{a}</label>
                        <JogInput id={`jog${a}`} />
                      </JogRow>
                    ))}
                  </div>
                  <JogButtons>
                    <JogButton>상대 JOG</JogButton>
                    <JogButton $color="#900000">절대 JOG</JogButton>
                    <JogButton $set>현재좌표Set</JogButton>
                  </JogButtons>
                </JogGrid>
              </Box>
            </div>
          </Functions>

          <Viewer>
            <ViewTools>
              {["T", "100%", "B", "cut"].map((k) => (
                <ViewButton key={k} aria-label={k}><Lens kind={k} /></ViewButton>
              ))}
              <ViewButton aria-label="target"><TargetIcon /></ViewButton>
              <ViewButton aria-label="list"><ListIcon /></ViewButton>
              <Checks>
                {["Z4-Z3 Pos", "AutoCAD(TM) Emul.", "Mcode View", "Old View"].map((c) => (
                  <Check key={c}><CheckBox type="checkbox" />{c}</Check>
                ))}
                <Cursor>(33.0306,-295.0323)</Cursor>
              </Checks>
            </ViewTools>
            <Plot />
          </Viewer>
        </Main>

        <Electric>
          <Meter />
          <Box $pad="0 5px 3px 4px">
            <Legend $ml={7}>전기조건</Legend>
            <ElecBody>
              <ElecLeft>
                <EpButton>EP</EpButton>
                <ParamInput $green $bold $w={39} aria-label="EP" defaultValue="4" />
                <Spinner name="EP" />
                <OnlineLabel><CheckBox $blue type="checkbox" defaultChecked />E-Online</OnlineLabel>
                <IconButton aria-label="저장"><Floppy /></IconButton>
              </ElecLeft>
              <Params>
                {PARAMS.map(([n, v, o]) => (
                  <ParamField key={n} name={n} value={v} {...o} />
                ))}
              </Params>
            </ElecBody>
          </Box>
        </Electric>

        <RemoteTitle>Remote</RemoteTitle>
        <Remote>
          <Pad>
            <PadButton aria-label="왼쪽 위"><Corner d="M0 0h12L0 12z" /></PadButton>
            <PadButton>Y/V+</PadButton>
            <PadButton aria-label="오른쪽 위"><Corner d="M0 0h12v12z" /></PadButton>
            <PadButton>X/U-</PadButton>
            <PadButton $edge="#f08050" $color="#0000f0">UV.0</PadButton>
            <PadButton>X/U+</PadButton>
            <PadButton aria-label="왼쪽 아래"><Corner d="M0 0v12h12z" /></PadButton>
            <PadButton>Y/V-</PadButton>
            <PadButton aria-label="오른쪽 아래"><Corner d="M12 0v12H0z" /></PadButton>
          </Pad>
          <Divider />
          <Rows>
            <Row $gap={5}>
              <LampButton on w={45} $fs={11}><div><Zigzag />x1000</div></LampButton>
              <LampButton w={45} $fs={11}><div><Zigzag soft />x100</div></LampButton>
              <LampButton w={45} $fs={13}>x10</LampButton>
            </Row>
            <Row $gap={5}>
              <LampButton w={45} $fs={12} $bg="#a4c8f0">XY/UV</LampButton>
              <LampButton w={45} $fs={13}>x1</LampButton>
              <LampButton w={45} $fs={13}>x0.1</LampButton>
            </Row>
          </Rows>
          <ZCol>
            <PadButton $w={33}>Z+</PadButton>
            <PadButton $w={33}>Z-</PadButton>
          </ZCol>
          <Divider />
          <Rows>
            <Row $gap={7}>
              <LampButton on w={50}><TwoLine><Blue>Z</Blue><Green>Limit</Green><br /><Red>Set</Red></TwoLine></LampButton>
              <LampButton w={55}><TwoLine>S.Pos<br />Rtn.</TwoLine></LampButton>
              <LampButton w={55}><TwoLine>LBS.Pos<br />Rtn.</TwoLine></LampButton>
            </Row>
            <Row $gap={7}>
              <LampButton noLamp w={50}><TwoLine>ZLimit<br />Rtn.<Warning /></TwoLine></LampButton>
              <Horizontal>
                <LampButton w={55}><TwoLine>H.Pos<br />Rtn.</TwoLine></LampButton>
                <LampButton w={46}><TwoLine>H.Pos<br />Rtn.</TwoLine><Ban /></LampButton>
              </Horizontal>
            </Row>
          </Rows>
          <Divider />
          <Rows>
            <Row $gap={4}>
              <Horizontal>
                <LampStack><Lamp /><Lamp /><Lamp $on /><Lamp $on /></LampStack>
                <LampButton w={40}><TankIcon /></LampButton>
                <DButton>D</DButton>
              </Horizontal>
              <LampButton on w={41}><SprayPair /></LampButton>
              <LampButton w={41} $fs={13}>Ion</LampButton>
              <LampButton on w={41}><Drill /></LampButton>
              <LampButton on w={41} $edge="#3c7c80"><DecayWave /></LampButton>
              <LampButton w={41} $edge="#3c7c80"><Bends /></LampButton>
              <LampButton w={41} $edge="#3c7c80"><Horn /></LampButton>
            </Row>
            <Row $spread>
              <Cell>
                <Lamp />
                <Raised $w={53} $bg="#3498ff" $color="#fff" $edge="#104010">A. Start</Raised>
                <SButton>S</SButton>
              </Cell>
              <Horizontal>
                <LampStack $two><Lamp /><Lamp /></LampStack>
                <LampButton w={41}><Belt /></LampButton>
              </Horizontal>
              <LampButton w={41}><SprayIcon /></LampButton>
              <LampButton w={41} $bg="#9898ff"><Lightning /></LampButton>
              <LampButton w={53} $bg="#008000" $color="#fff">Start</LampButton>
              <LampButton w={53} $bg="#ff0000" $color="#fff" $edge="#900000">Stop</LampButton>
            </Row>
          </Rows>
          <Rows $push>
            <Row><LampButton on w={59} $bg="#cecdd7" $color="#000" $fs={14}>수동</LampButton></Row>
            <Row><LampButton w={59} $bg="#c8b898" $color="#000" $fs={14}>자동</LampButton></Row>
          </Rows>
          <LastCol>
            <Gold><Raised $w={65} $bg="#008000" $color="#fff" $edge="#104010">Ready</Raised></Gold>
            <ResetWrap><ResetButton $w={65} $bg="#ff8000" $color="#201000">Reset</ResetButton></ResetWrap>
          </LastCol>
        </Remote>

        <Status>
          <Dot />
          {STATUS.map(([t, bg]) => (
            <StatusCell key={t} $bg={bg}>{t}</StatusCell>
          ))}
        </Status>
      </Frame>
      <Taskbar />
    </Desktop>
  );
}
